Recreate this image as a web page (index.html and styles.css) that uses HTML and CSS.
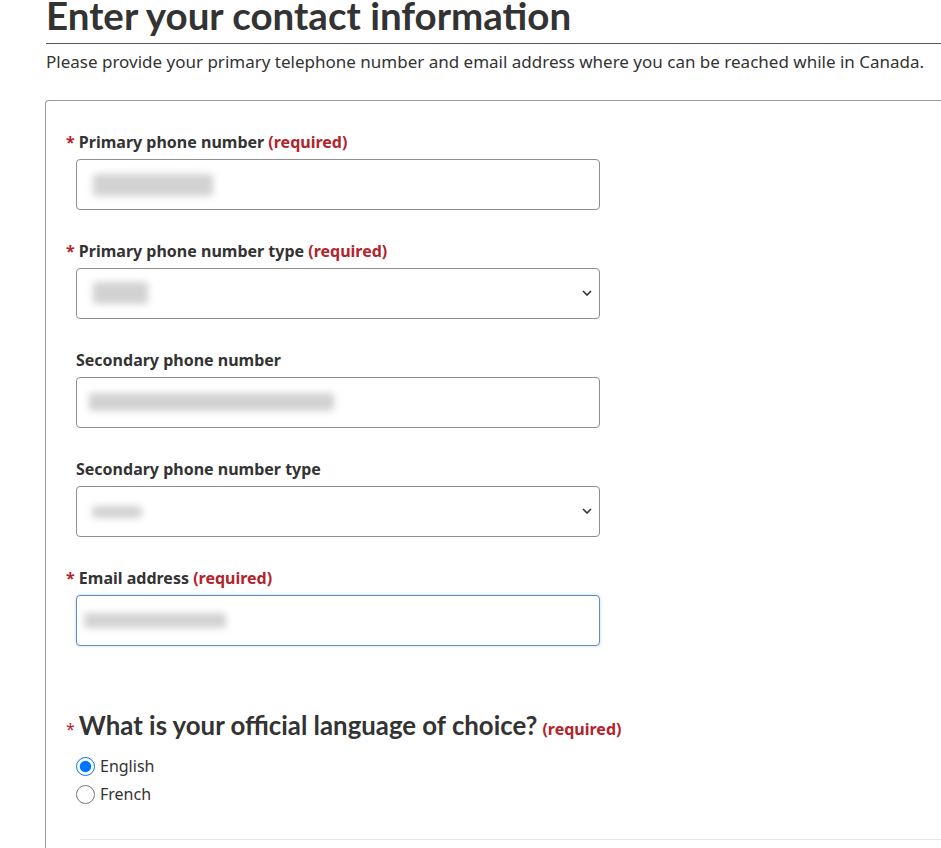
FILE: index.html
```html
<!DOCTYPE html>
<html lang="en">
<head>
<meta charset="utf-8">
<title>Enter your contact information</title>
<link rel="stylesheet" href="styles.css">
</head>
<body>
<main class="page">
  <h1 class="title">Enter your contact information</h1>
  <p class="intro">Please provide your primary telephone number and email address where you can be reached while in Canada.</p>

  <form class="panel">
    <div class="group">
      <label class="label"><span class="star">*</span> Primary phone number <strong class="req">(required)</strong></label>
      <div class="field"><span class="blur blur-phone"></span></div>
    </div>

    <div class="group">
      <label class="label"><span class="star">*</span> Primary phone number type <strong class="req">(required)</strong></label>
      <div class="field select"><span class="blur blur-type"></span>
        <svg class="chev" width="10" height="6" viewBox="0 0 10 6"><path d="M1 1 L5 5 L9 1" fill="none" stroke="#333" stroke-width="1.6"/></svg>
      </div>
    </div>

    <div class="group">
      <label class="label">Secondary phone number</label>
      <div class="field"><span class="blur blur-phone2"></span></div>
    </div>

    <div class="group">
      <label class="label">Secondary phone number type</label>
      <div class="field select"><span class="blur blur-type2"></span>
        <svg class="chev" width="10" height="6" viewBox="0 0 10 6"><path d="M1 1 L5 5 L9 1" fill="none" stroke="#333" stroke-width="1.6"/></svg>
      </div>
    </div>

    <div class="group last">
      <label class="label"><span class="star">*</span> Email address <strong class="req">(required)</strong></label>
      <div class="field focus"><span class="blur blur-email"></span></div>
    </div>

    <div class="lang">
      <div class="legend"><span class="star small">*</span><span class="legend-text">What is your official language of choice?</span><strong class="req legend-req">(required)</strong></div>
      <label class="radio first"><input type="radio" name="lang" checked> English</label>
      <label class="radio"><input type="radio" name="lang"> French</label>
    </div>

    <div class="rule"></div>
  </form>
</main>
</body>
</html>
```

FILE: styles.css
```css
html, body {
  margin: 0;
  padding: 0;
  background: #fff;
  overflow: hidden;
}

body {
  font-family: "Noto Sans", "DejaVu Sans", sans-serif;
  color: #333;
  font-size: 16px;
}

.page {
  padding-left: 46px;
}

.title {
  font-family: Lato, "Noto Sans", sans-serif;
  font-weight: 700;
  font-size: 38.5px;
  line-height: 45px;
  color: #333;
  margin: -7px 0 0 0;
  padding-bottom: 5px;
  border-bottom: 1px solid #5a5252;
}

.intro {
  margin: 7px 0 0 0;
  font-size: 17px;
  line-height: 22px;
}

.panel {
  margin: 27px -20px 0 -1px;
  border: 1px solid #999;
  border-right: none;
  border-radius: 4px 0 0 0;
  padding: 30px 0 60px 30px;
}

.group {
  margin-bottom: 30px;
}

.group.last {
  margin-bottom: 0;
}

.label {
  display: block;
  font-weight: 700;
  line-height: 23px;
  margin-bottom: 5px;
}

.star {
  color: #b3232b;
  margin-left: -10px;
}

.req {
  color: #b3232b;
  font-weight: 700;
}

.field {
  position: relative;
  box-sizing: border-box;
  width: 524px;
  height: 51px;
  border: 1px solid #8f8f8f;
  border-radius: 4px;
  background: #fff;
}

.field.focus {
  border-color: #5f8fbf;
  box-shadow: 0 0 3px rgba(102, 160, 220, 0.45);
}

.chev {
  position: absolute;
  right: 7px;
  top: 21px;
}

.blur {
  position: absolute;
  background: #d2d2d2;
  filter: blur(3.5px);
  border-radius: 3px;
}

.blur-phone { left: 16px; top: 14px; width: 120px; height: 22px; }
.blur-type { left: 16px; top: 13px; width: 55px; height: 22px; }
.blur-phone2 { left: 12px; top: 15px; width: 245px; height: 18px; }
.blur-type2 { left: 15px; top: 19px; width: 50px; height: 12px; }
.blur-email { left: 7px; top: 17px; width: 142px; height: 15px; }

.lang {
  margin-top: 64px;
}

.legend {
  line-height: 31px;
}

.star.small {
  font-size: 16px;
  margin-right: 4px;
}

.legend-text {
  font-family: Lato, "Noto Sans", sans-serif;
  font-weight: 700;
  font-size: 25.8px;
  color: #333;
}

.legend-req {
  margin-left: 5px;
}

.radio {
  display: flex;
  align-items: center;
  height: 28px;
  line-height: 28px;
}

.radio.first {
  margin-top: 7px;
}

.radio input {
  width: 19px;
  height: 19px;
  margin: 0 5px 0 0;
  accent-color: #0075ff;
}

.rule {
  margin: 31px 0 0 4px;
  border-top: 1px solid #e6e6e6;
}
```
